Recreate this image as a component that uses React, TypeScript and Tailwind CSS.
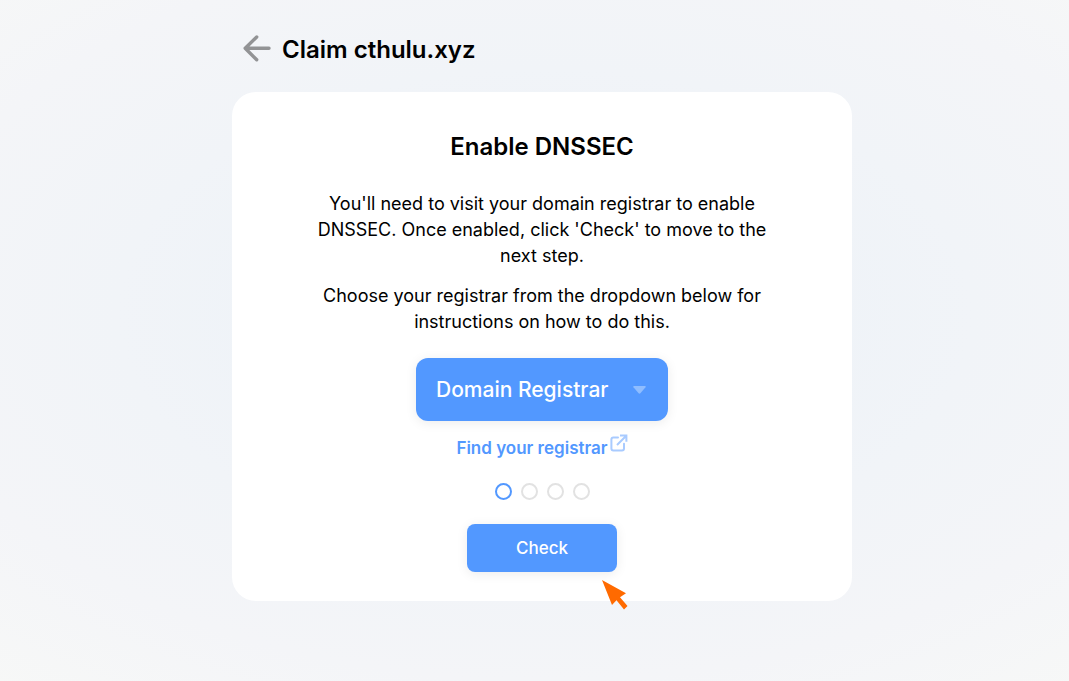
import { useState } from "react";

const registrars = ["Domain Registrar", "GoDaddy", "Namecheap", "Gandi", "Google Domains"];
const steps = [1, 2, 3, 4];

function BackArrow() {
  return (
    <svg width="28" height="27" viewBox="0 0 28 27" fill="none" stroke="#929395" strokeWidth="3.4" strokeLinecap="round" strokeLinejoin="round" aria-hidden="true">
      <path d="M26 13.3H2.4M13.7 2 2.2 13.3l11.5 11.5" />
    </svg>
  );
}

function ExternalIcon() {
  return (
    <svg width="18" height="18" viewBox="0 0 18 18" fill="none" stroke="#a9cbff" strokeWidth="2" aria-hidden="true">
      <path d="M8 3.6H3.4Q1.4 3.6 1.4 5.6V14.4Q1.4 16.4 3.4 16.4H12Q14 16.4 14 14.4V9.8" strokeLinecap="round" />
      <path d="M7 11 16 2M10 1.6H16.4V7.8" />
    </svg>
  );
}

function Pointer() {
  return (
    <svg className="pointer-events-none absolute -right-3 top-14" width="28" height="30" viewBox="0 0 28 30" aria-hidden="true">
      <path d="M1 0 25 13.3 19 17.2 26.5 26 23 29.5 15.5 20.2 11 25Z" fill="#ff6a00" />
    </svg>
  );
}

export default function App() {
  const [registrar, setRegistrar] = useState(registrars[0]);

  return (
    <div className="min-h-screen bg-[radial-gradient(ellipse_100%_90%_at_51%_46%,#ebf1f7_0%,#f1f4f8_40%,#f4f5f8_60%,#f7f8f7_80%)] pt-8 pr-4 pb-20 pl-[31px] font-['Inter','Liberation_Sans',sans-serif] text-black">
      <main className="mx-auto flex max-w-[620px] flex-col gap-6">
        <header className="flex h-9 items-center gap-[11px] pl-[11px]">
          <button type="button" aria-label="Back" className="cursor-pointer pb-[3px]">
            <BackArrow />
          </button>
          <h1 className="text-2xl font-semibold">Claim cthulu.xyz</h1>
        </header>

        <section className="flex flex-col items-center rounded-3xl bg-white px-6 pt-[37px] pb-[29px] text-center">
          <h2 className="text-2xl leading-9 font-semibold">Enable DNSSEC</h2>
          <div className="mt-[26px] flex max-w-[460px] flex-col gap-[14px] text-lg leading-[26px]">
            <p>You'll need to visit your domain registrar to enable DNSSEC. Once enabled, click 'Check' to move to the next step.</p>
            <p>Choose your registrar from the dropdown below for instructions on how to do this.</p>
          </div>

          <div className="mt-[23px] grid w-[252px] items-center rounded-xl bg-[#5298ff] shadow-[0_2px_12px_rgba(0,0,0,0.08)]">
            <select
              aria-label="Domain Registrar"
              value={registrar}
              onChange={(event) => setRegistrar(event.target.value)}
              className="col-start-1 row-start-1 h-[63px] w-full cursor-pointer appearance-none rounded-xl bg-transparent pr-12 pl-5 text-[21px] font-medium text-white"
            >
              {registrars.map((name) => (
                <option key={name} className="text-black">{name}</option>
              ))}
            </select>
            <svg className="pointer-events-none col-start-1 row-start-1 mr-[22px] justify-self-end" width="13" height="8" viewBox="0 0 13 8" aria-hidden="true">
              <path d="M1 0H12Q13.2 .2 12.5 1.2L7.4 7.2Q6.5 8.1 5.6 7.2L.5 1.2Q-.2 .2 1 0Z" fill="#8fbdff" />
            </svg>
          </div>

          <a href="#registrar" className="mt-3 flex h-[30px] items-start gap-[2px] text-[17px] leading-[30px] font-semibold text-[#5298ff]">
            Find your registrar
            <span className="pt-px"><ExternalIcon /></span>
          </a>

          <ol className="mt-5 flex gap-[9px]" aria-label="Progress">
            {steps.map((step) => (
              <li
                key={step}
                aria-current={step === 1 ? "step" : undefined}
                className={step === 1 ? "size-[17px] rounded-full border-2 border-[#5298ff]" : "size-[17px] rounded-full border-2 border-[#e2e2e2]"}
              />
            ))}
          </ol>

          <div className="relative mt-6">
            <button type="button" className="h-12 w-[150px] cursor-pointer rounded-lg bg-[#5298ff] pt-[2px] text-[17px] font-medium text-white shadow-[0_2px_12px_rgba(0,0,0,0.08)]">
              Check
            </button>
            <Pointer />
          </div>
        </section>
      </main>
    </div>
  );
}
